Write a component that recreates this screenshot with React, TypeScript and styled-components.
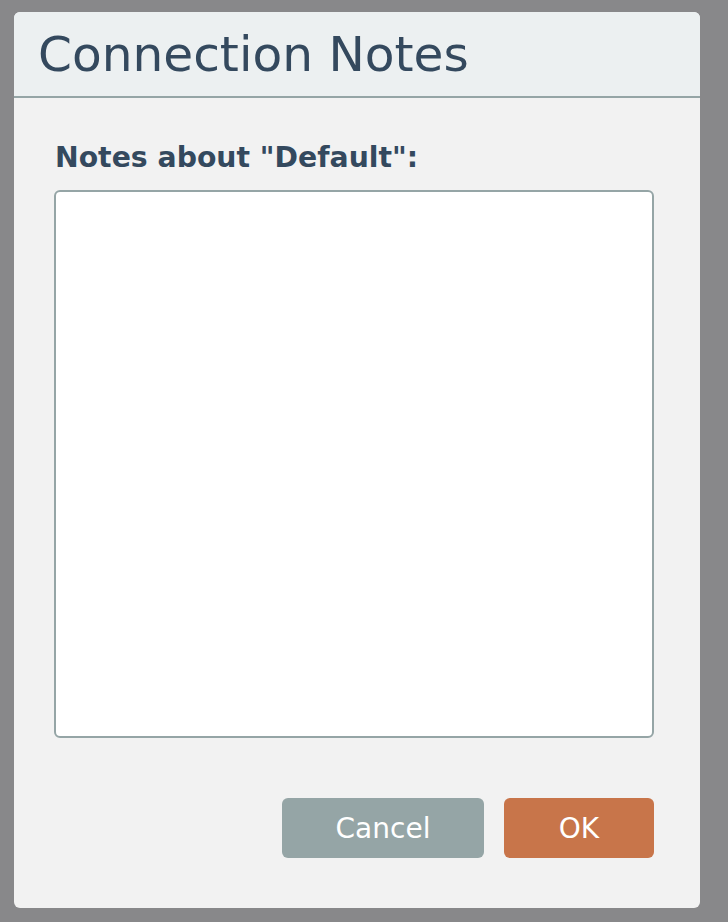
import React from "react";
import styled, { createGlobalStyle } from "styled-components";

const Global = createGlobalStyle`
  html, body { margin: 0; padding: 0; background: #88888a; }
  body { font-family: "DejaVu Sans", Verdana, sans-serif; }
`;

const Page = styled.div`
  width: 728px;
  height: 922px;
  box-sizing: border-box;
  padding: 12px 28px 14px 14px;
`;

const Dialog = styled.div`
  width: 686px;
  height: 896px;
  background: #f2f2f2;
  border-radius: 6px;
  overflow: hidden;
  display: flex;
  flex-direction: column;
`;

const Header = styled.div`
  background: #ecf0f1;
  border-bottom: 2px solid #95a5a6;
  height: 86px;
  box-sizing: border-box;
  padding: 0 24px;
  display: flex;
  align-items: center;
  flex-shrink: 0;
`;

const Title = styled.h1`
  margin: 0;
  font-weight: normal;
  font-size: 48.6px;
  line-height: 1;
  color: #34495e;
  font-family: "DejaVu Sans", Verdana, sans-serif;
`;

const Body = styled.div`
  flex: 1;
  padding: 43px 46px 0 40px;
  display: flex;
  flex-direction: column;
`;

const Label = styled.label`
  font-weight: bold;
  font-size: 28.3px;
  line-height: 33px;
  color: #34495e;
  margin-left: 1px;
  margin-bottom: 16px;
`;

const Area = styled.textarea`
  width: 600px;
  height: 548px;
  box-sizing: border-box;
  border: 2px solid #95a5a6;
  border-radius: 6px;
  background: #fff;
  resize: none;
  outline: none;
  font-family: inherit;
  font-size: 16px;
  margin: 0;
  display: block;
  flex-shrink: 0;
`;

const Footer = styled.div`
  display: flex;
  justify-content: flex-end;
  gap: 20px;
  margin-top: 60px;
  width: 600px;
`;

const Button = styled.button<{ $primary?: boolean; $w: number }>`
  width: ${(p) => p.$w}px;
  height: 60px;
  border: none;
  border-radius: 6px;
  background: ${(p) => (p.$primary ? "#c8754a" : "#95a5a6")};
  color: #fff;
  font-family: "DejaVu Sans", Verdana, sans-serif;
  font-size: 28px;
  padding: 0;
  cursor: pointer;
`;

export default function App() {
  return (
    <>
      <Global />
      <Page>
        <Dialog>
          <Header>
            <Title>Connection Notes</Title>
          </Header>
          <Body>
            <Label>Notes about "Default":</Label>
            <Area />
            <Footer>
              <Button $w={202}>Cancel</Button>
              <Button $w={150} $primary>OK</Button>
            </Footer>
          </Body>
        </Dialog>
      </Page>
    </>
  );
}
